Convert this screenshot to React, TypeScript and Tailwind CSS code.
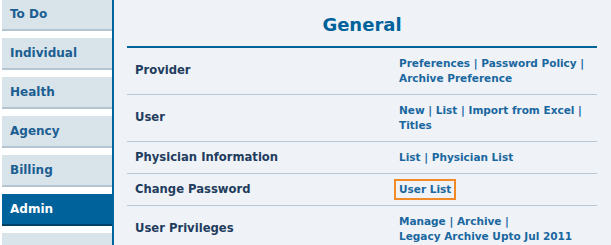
import React from "react";

const tabs = ["To Do", "Individual", "Health", "Agency", "Billing", "Admin", ""];

const rows: { label: string; links: string[][]; boxed?: boolean }[] = [
  { label: "Provider", links: [["Preferences", "Password Policy", ""], ["Archive Preference"]] },
  { label: "User", links: [["New", "List", "Import from Excel", ""], ["Titles"]] },
  { label: "Physician Information", links: [["List", "Physician List"]] },
  { label: "Change Password", links: [["User List"]], boxed: true },
  { label: "User Privileges", links: [["Manage", "Archive", ""], ["Legacy Archive Upto Jul 2011"]] },
];

export default function App() {
  return (
    <div className="w-[611px] h-[245px] flex overflow-hidden bg-white font-['DejaVu_Sans',sans-serif]">
      {/* sidebar */}
      <div className="w-[114px] shrink-0 pl-[2px] border-r-2 border-[#00639b] bg-white">
        <div className="-mt-px flex flex-col gap-[7px]">
          {tabs.map((t) => (
            <div
              key={t || "blank"}
              className={
                t === "Admin"
                  ? "h-[32px] flex items-center pl-[8px] bg-[#00629b] border-b-2 border-[#003f66] text-white text-[12px] font-bold"
                  : "h-[32px] flex items-center pl-[8px] bg-[#d8e3ea] border-b-2 border-[#b4c5d1] text-[#1b5e92] text-[12px] font-bold"
              }
            >
              {t}
            </div>
          ))}
        </div>
      </div>

      {/* content */}
      <div className="flex-1 bg-[#eff3f7] pl-[13px] pr-[14px]">
        <div className="h-[48px] flex items-center justify-center border-b-2 border-[#00649b] text-[#00629b] text-[18px] font-bold pt-[3px]">
          General
        </div>
        {rows.map((r) => (
          <div key={r.label} className="grid grid-cols-[264px_1fr] border-b border-[#b7c8d6]">
            <div className="flex items-center pl-[8px] text-[#1f3c5e] text-[11.6px] font-bold">{r.label}</div>
            <div className="py-[8px] pl-[8px] text-[#1a67a0] text-[10.5px] font-bold leading-[15px]">
              {r.links.map((line, i) => (
                <div key={i}>
                  {r.boxed ? (
                    <span className="inline-block border-2 border-[#f28a27] px-[3px] -mx-[5px] -my-[3px] py-[1px]">{line[0]}</span>
                  ) : (
                    line.map((l, j) => (
                      <span key={j}>
                        {j > 0 && <span> | </span>}
                        {l}
                      </span>
                    ))
                  )}
                </div>
              ))}
            </div>
          </div>
        ))}
      </div>
    </div>
  );
}
